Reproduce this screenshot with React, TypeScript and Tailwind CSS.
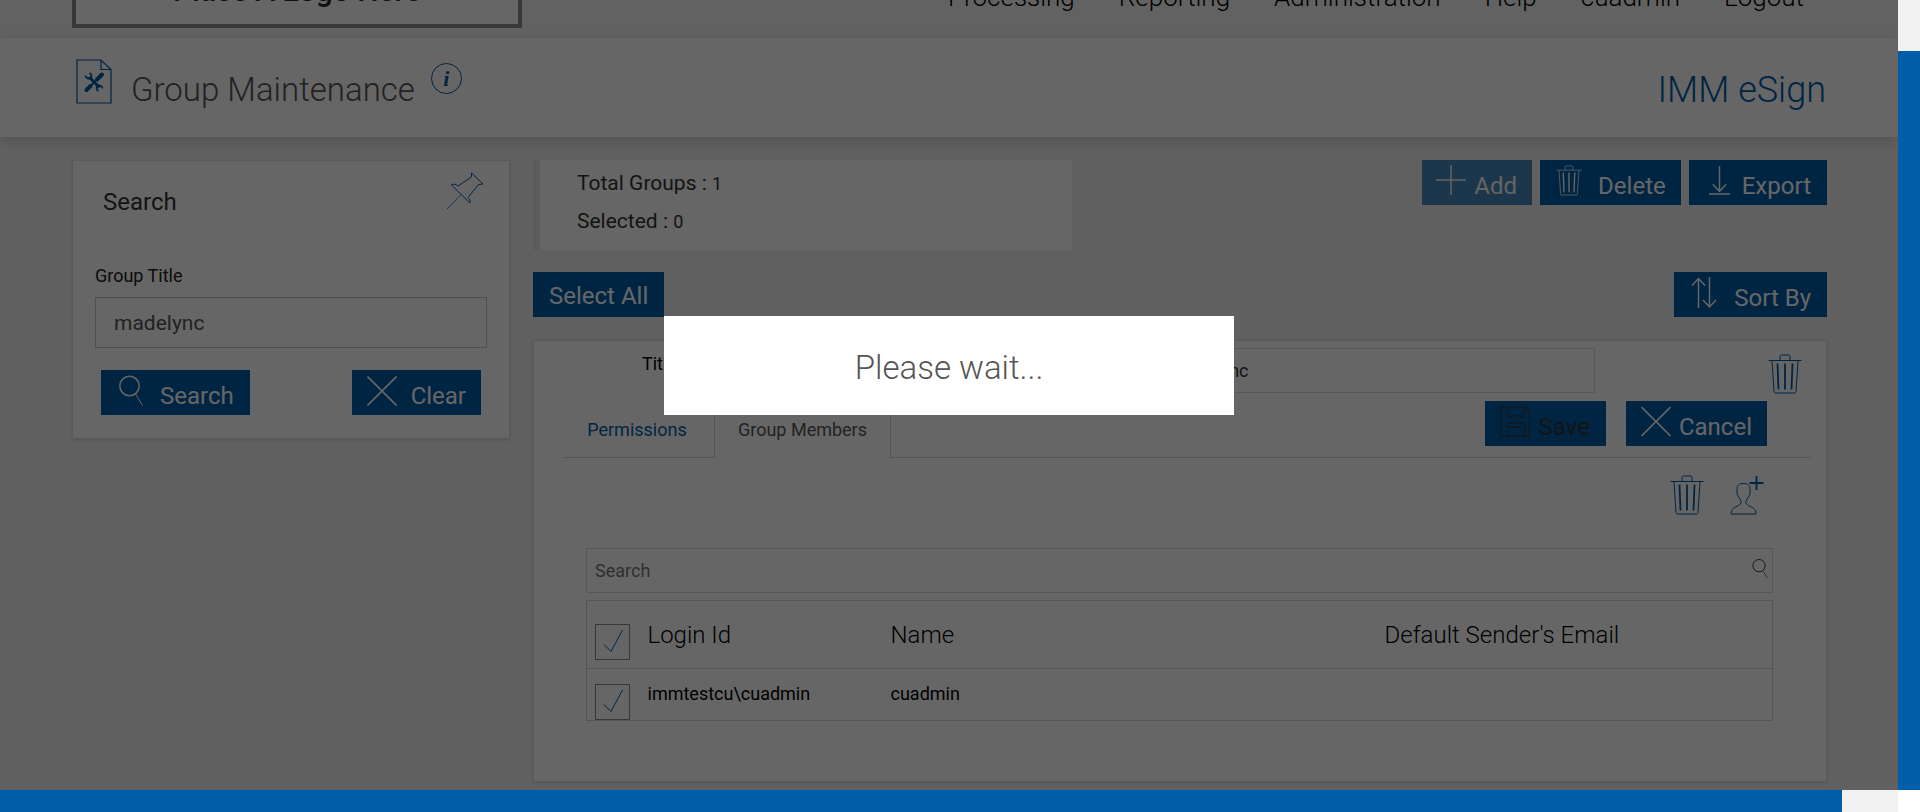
import { useState } from "react";
import type { ReactNode } from "react";

type IconProps = { className?: string };

interface Member { id: number; login: string; name: string; email: string; }

const members: Member[] = [{ id: 1, login: "immtestcu\\cuadmin", name: "cuadmin", email: "" }];
const menu = ["Processing", "Reporting", "Administration", "Help", "cuadmin", "Logout"];

function TrashIcon({ className }: IconProps) {
  return (
    <svg className={className} viewBox="0 0 34 40" fill="none" stroke="currentColor" aria-hidden="true">
      <path d="M.5 6.500h33M12 6V2.500q0-1.500 1.500-1.500h7q1.500 0 1.500 1.500V6M4 7l2 30.500q.2 1.500 1.500 1.500h19q1.300 0 1.500-1.500L30 7" />
      <path d="M9.500 9.500l1 26M17 9.500v26M24.500 9.500l-1 26" strokeWidth="1.800" />
    </svg>
  );
}

function PlusIcon({ className }: IconProps) {
  return (
    <svg className={className} viewBox="0 0 30 30" fill="none" stroke="currentColor" strokeWidth="1.500" aria-hidden="true">
      <path d="M15 0v30M0 15h30" />
    </svg>
  );
}

function DownloadIcon({ className }: IconProps) {
  return (
    <svg className={className} viewBox="0 0 22 30" fill="none" stroke="currentColor" strokeWidth="1.500" aria-hidden="true">
      <path d="M11 0v26M4 19l7 7.500L18 19M0 29.200h22" />
    </svg>
  );
}

function SortIcon({ className }: IconProps) {
  return (
    <svg className={className} viewBox="0 0 26 32" fill="none" stroke="currentColor" strokeWidth="1.500" aria-hidden="true">
      <path d="M7.500 31V1.500M1 8.500l6.500-7 6.500 7M18.500 0v30M12 23l6.500 7 6.500-7" />
    </svg>
  );
}

function CrossIcon({ className }: IconProps) {
  return (
    <svg className={className} viewBox="0 0 30 30" fill="none" stroke="currentColor" strokeWidth="1.600" aria-hidden="true">
      <path d="M.5.5l29 29M29.500.5l-29 29" />
    </svg>
  );
}

function LensIcon({ className }: IconProps) {
  return (
    <svg className={className} viewBox="0 0 24 30" fill="none" stroke="currentColor" aria-hidden="true">
      <circle cx="10.500" cy="10.500" r="9.700" strokeWidth="1.500" />
      <path d="M16.500 18.500L23.500 30" />
    </svg>
  );
}

function SaveIcon({ className }: IconProps) {
  return (
    <svg className={className} viewBox="0 0 30 30" fill="none" stroke="currentColor" aria-hidden="true">
      <path d="M.5.5h24l5 5v24H.5zM7.500.5v9h17v-9M7.500 29.500V16.500h17v13" />
      <path d="M9 20.500h13.500" strokeWidth="1.500" />
    </svg>
  );
}

function UserPlusIcon({ className }: IconProps) {
  return (
    <svg className={className} viewBox="0 0 34 40" fill="none" stroke="currentColor" aria-hidden="true">
      <path d="M13.500 8.500c-4.500 0-6.200 1.800-6.500 5v5c.6 3.500 3.500 5 4 8 0 2-.5 3-2.500 4C4.500 32.500 1 33.500 1 39h25c0-5.500-3.500-6.500-7.500-8.500-2-1-2.500-2-2.500-4 .5-3 3.400-4.500 4-8v-5c-.3-3.200-2-5-6.500-5z" />
      <path d="M26.500 1v14M19.500 8h14" strokeWidth="1.800" />
    </svg>
  );
}

function PinIcon({ className }: IconProps) {
  return (
    <svg className={className} viewBox="0 0 38 38" fill="none" stroke="currentColor" aria-hidden="true">
      <path d="M25.500 1L37 12l-4.500.5L22 25.500c2 1.500 2.500 3.500 2 5.500L5.500 13c2-1.500 4-1 6.500 1L25.500 5z" />
      <path d="M15 22.500L1 37" strokeWidth=".7" />
    </svg>
  );
}

function ToolsPageIcon({ className }: IconProps) {
  return (
    <svg className={className} viewBox="0 0 36 46" fill="none" stroke="currentColor" aria-hidden="true">
      <path d="M1 1h24l10 9.500V44H1zM25 1v9.500h10" strokeWidth="1.200" />
      <path d="M13 18l10.500 10.500" strokeWidth="3" />
      <path d="M9.500 16.500a3.300 3.300 0 0 0 5.500 2.200 3.300 3.300 0 0 0-1.500-4.700M26.500 29.500a3.300 3.300 0 0 0-5.500-2.200 3.300 3.300 0 0 0 1.500 4.700" strokeWidth="1.800" />
      <path d="M26 15.500L10.500 31" strokeWidth="1.800" />
      <path d="M26 15.500l-5 5M14.500 27l-4 4" strokeWidth="4" strokeLinecap="round" />
    </svg>
  );
}

function BlueButton({ children, className = "text-white", disabled }: { children: ReactNode; className?: string; disabled?: boolean }) {
  return (
    <button type="button" disabled={disabled} className={`flex h-[45px] items-start bg-[#005da8] pt-[5px] text-2xl ${className}`}>
      {children}
    </button>
  );
}

function Tick({ label }: { label: string }) {
  return (
    <span className="relative block h-9 w-[35px]">
      <input type="checkbox" defaultChecked aria-label={label} className="block h-9 w-[35px] appearance-none border border-[#8c8c8c]" />
      <svg viewBox="0 0 35 36" className="pointer-events-none absolute inset-0 h-9 w-[35px] text-[#005da8]" fill="none" stroke="currentColor" aria-hidden="true">
        <path d="M9 20.500l7 7L27.500 6" />
      </svg>
    </span>
  );
}

export default function GroupMaintenance() {
  const [title, setTitle] = useState("madelync");

  return (
    <div className="grid h-screen grid-cols-[1fr_22px] grid-rows-[1fr_22px] overflow-hidden bg-white font-[Roboto,sans-serif] text-black">
      <div className="relative flex flex-col overflow-hidden bg-[#f0f0f0]">
        {/* Header */}
        <header className="flex h-[38px] shrink-0 items-end justify-between bg-[#f5f5f5] pr-[94px] pl-[72px]">
          <div className="mb-[10px] flex h-[100px] w-[450px] items-end justify-center border-4 border-[#8c8c8c] bg-white pb-[11px] text-[30px] font-medium text-[#2a2a2a]">
            Place A Logo Here
          </div>
          <nav className="mb-[27px] flex gap-11 text-[26px] leading-7 font-light">
            {menu.map(m => <a key={m} href="#">{m}</a>)}
          </nav>
        </header>

        {/* Page title */}
        <div className="relative flex h-[99px] shrink-0 items-start justify-between bg-white pr-[72px] pl-[76px] shadow-[0_3px_12px_rgba(0,0,0,0.16)]">
          <div className="flex pt-[21px]">
            <ToolsPageIcon className="h-[46px] w-9 text-[#005da8]" />
            <h1 className="mt-[11px] ml-[19px] text-[33px] leading-[40px] font-light text-[#555]">Group Maintenance</h1>
            <button type="button" aria-label="Information" className="mt-1 ml-4 flex h-[31px] w-[31px] items-center justify-center rounded-full border border-[#005da8] font-[Liberation_Serif,serif] text-[22px] leading-none font-bold text-[#005da8] italic">i</button>
          </div>
          <div className="pt-8 text-4xl leading-[40px] font-light text-[#005da8]">IMM eSign</div>
        </div>

        <main className="flex items-start gap-[23px] pt-[23px] pr-[71px] pl-[72px]">
          {/* Search panel */}
          <aside className="h-[279px] w-[438px] shrink-0 border border-[#e0e0e0] bg-white px-[22px] shadow-sm">
            <div className="flex items-start justify-between pt-[11px] pr-[3px] pl-2">
              <h2 className="pt-[14px] text-2xl text-[#333]">Search</h2>
              <button type="button" aria-label="Pin" className="text-[#005da8]"><PinIcon className="h-[38px] w-[38px]" /></button>
            </div>
            <label htmlFor="group-title" className="mt-[46px] block text-lg leading-6 text-[#222]">Group Title</label>
            <input id="group-title" defaultValue="madelync" className="mt-[9px] block h-[51px] w-full border border-[#c8c8c8] bg-white px-[18px] text-[21px] text-[#555]" />
            <div className="mt-[22px] flex justify-between px-[6px]">
              <BlueButton className="pr-4 pl-[18px] text-white"><LensIcon className="h-[31px] w-6" /><span className="ml-[17px] pt-[5px]">Search</span></BlueButton>
              <BlueButton className="pr-[15px] pl-[15px] text-white"><CrossIcon className="mt-px h-[30px] w-[30px]" /><span className="ml-[14px] pt-[5px]">Clear</span></BlueButton>
            </div>
          </aside>

          <section className="flex min-w-0 flex-1 flex-col">
            <div className="flex items-start justify-between">
              <div className="h-[90px] w-[539px] border-l-[7px] border-[#e4e4e4] bg-white pt-1 pl-[37px] text-[21px] leading-[38px] text-[#333]">
                <p>Total Groups : <span className="text-lg">1</span></p>
                <p>Selected : <span className="text-lg">0</span></p>
              </div>
              <div className="flex gap-2">
                <BlueButton disabled className="pr-[15px] pl-[14px] text-white opacity-70"><PlusIcon className="h-[30px] w-[30px]" /><span className="ml-2 pt-[5px]">Add</span></BlueButton>
                <BlueButton className="pr-[15px] pl-4 text-white"><TrashIcon className="h-[31px] w-[26px]" /><span className="ml-4 pt-[5px]">Delete</span></BlueButton>
                <BlueButton className="pr-4 pl-5 text-white"><DownloadIcon className="h-[31px] w-[21px]" /><span className="ml-3 pt-[5px]">Export</span></BlueButton>
              </div>
            </div>

            <div className="mt-[22px] flex justify-between">
              <BlueButton className="px-4 text-white"><span className="pt-[3px]">Select All</span></BlueButton>
              <BlueButton className="pr-4 pl-[17px] text-white"><SortIcon className="h-8 w-[26px]" /><span className="ml-[17px] pt-[5px]">Sort By</span></BlueButton>
            </div>

            {/* Group details */}
            <article className="mt-[23px] h-[442px] border border-[#e0e0e0] bg-white shadow-sm">
              <div className="flex items-start pt-[7px] pr-6 pl-[108px]">
                <label htmlFor="title" className="w-[510px] pt-[4px] text-lg leading-6">Title</label>
                <input id="title" value={title} onChange={e => setTitle(e.target.value)} className="h-[45px] min-w-0 flex-1 border border-[#dcdcdc] bg-white px-[18px] text-lg text-[#333]" />
                <button type="button" aria-label="Delete group" className="mt-[6px] ml-[173px] text-[#005da8]"><TrashIcon className="h-10 w-[34px]" /></button>
              </div>

              <div className="mr-[15px] ml-[30px] flex h-16 text-lg">
                <button type="button" className="w-[151px] border-r border-b border-[#d4d4d4] pt-2 pr-1 text-[#005da8]">Permissions</button>
                <button type="button" className="w-[175px] pt-2 text-[#555]">Group Members</button>
                <div className="flex flex-1 justify-end gap-5 border-b border-l border-[#d4d4d4] pt-[7px] pr-11">
                  <BlueButton disabled className="pr-4 pl-[15px] text-[#333]"><SaveIcon className="h-[31px] w-[30px]" /><span className="ml-[9px] pt-[5px]">Save</span></BlueButton>
                  <BlueButton className="pr-[15px] pl-[15px] text-white"><CrossIcon className="h-[31px] w-[30px]" /><span className="ml-2 pt-[5px]">Cancel</span></BlueButton>
                </div>
              </div>

              <div className="mt-[17px] mr-[62px] flex justify-end gap-[26px] text-[#005da8]">
                <button type="button" aria-label="Remove members"><TrashIcon className="h-10 w-[34px]" /></button>
                <button type="button" aria-label="Add member"><UserPlusIcon className="h-10 w-[34px]" /></button>
              </div>

              <div className="mt-[33px] mr-[53px] ml-[52px]">
                <div className="flex h-[45px] items-start border border-[#dcdcdc]">
                  <input aria-label="Search members" placeholder="Search" className="h-full flex-1 px-2 text-lg placeholder:text-[#777]" />
                  <LensIcon className="mt-[10px] mr-1 h-[19px] w-4 text-[#333]" />
                </div>
                <table className="mt-[7px] w-full table-fixed border border-[#d4d4d4] text-left">
                  <thead>
                    <tr className="h-[68px] border-b border-[#d4d4d4] text-2xl">
                      <th className="w-[61px] pt-[23px] pl-2 align-top"><Tick label="Select all members" /></th>
                      <th className="w-[243px] pt-[18px] align-top font-light">Login Id</th>
                      <th className="pt-[18px] align-top font-light">Name</th>
                      <th className="w-[388px] pt-[18px] align-top font-light">Default Sender's Email</th>
                    </tr>
                  </thead>
                  <tbody>
                    {members.map(m => (
                      <tr key={m.id} className="h-[52px] text-lg leading-6">
                        <td className="pt-[15px] pl-2 align-top"><Tick label={m.login} /></td>
                        <td className="pt-[13px] align-top">{m.login}</td>
                        <td className="pt-[13px] align-top">{m.name}</td>
                        <td>{m.email}</td>
                      </tr>
                    ))}
                  </tbody>
                </table>
              </div>
            </article>
          </section>
        </main>

        {/* Wait dialog */}
        <div className="absolute inset-0 flex justify-center bg-black/60 pt-[316px]">
          <div role="dialog" aria-label="Please wait" className="flex h-[99px] w-[570px] items-center justify-center bg-white pt-1 text-[33px] font-light text-[#555]">
            Please wait...
          </div>
        </div>
      </div>

      {/* Scroll bars */}
      <div className="bg-[#f1f1f1] pt-[51px]"><div className="h-full bg-[#005da8]" /></div>
      <div className="bg-[#f1f1f1] pr-14"><div className="h-full bg-[#005da8]" /></div>
    </div>
  );
}
